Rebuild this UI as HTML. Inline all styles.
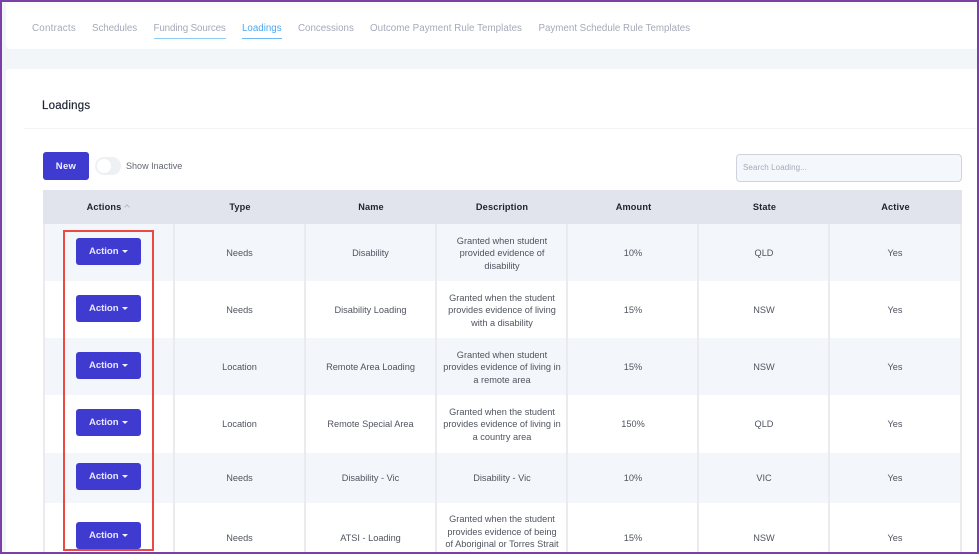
<!DOCTYPE html>
<html><head><meta charset="utf-8">
<style>
html,body{margin:0;padding:0;background:#fff}
#p{position:relative;width:979px;height:554px;overflow:hidden;background:#fff;font-family:"Liberation Sans",sans-serif}
#p div{position:absolute;box-sizing:border-box}
.t{white-space:nowrap;transform:translateX(-50%);text-align:center;font-size:9.2px;line-height:12px;color:#50545f;letter-spacing:0;height:12px;filter:blur(.25px)}
.tab{white-space:nowrap;font-size:9.75px;line-height:12px;color:#a4aab8;letter-spacing:0;top:23px;filter:blur(.25px)}
.h{white-space:nowrap;transform:translateX(-50%);font-size:9.2px;font-weight:bold;line-height:12px;color:#1f2230;letter-spacing:.15px;top:201px;filter:blur(.2px)}
.b{left:76px;width:65px;height:27px;background:#3f3ad0;border-radius:3px}
.bt{left:89px;white-space:nowrap;color:#f1f1ff;font-size:9.6px;line-height:12px;letter-spacing:-.05px;font-weight:bold;opacity:.95;filter:blur(.2px)}
.c{left:122px;width:0;height:0;border-left:3px solid transparent;border-right:3px solid transparent;border-top:3px solid #f1f1ff}
.v{width:2px;background:#ebebef;top:224px;height:330px}
.r{left:44px;width:917px;background:#f3f6fa}
</style></head><body>
<div id="p">
<div style="left:0;top:0;width:979px;height:70px;background:#f3f6f9"></div>
<div style="left:6px;top:0;width:973px;height:49px;background:linear-gradient(#fafafa,#fff 14px);border-radius:0 0 4px 4px"></div>
<div style="left:6px;top:69px;width:973px;height:490px;background:#fff;border-radius:4px 0 0 0"></div>
<div style="left:0;top:70px;width:6px;height:484px;background:#f3f6f9"></div>
<div style="left:24px;top:128px;width:955px;height:1px;background:#f3f4f6"></div>

<div class="tab" style="left:32px;letter-spacing:.25px">Contracts</div>
<div class="tab" style="left:92px;letter-spacing:-.05px">Schedules</div>
<div class="tab" style="left:153.500px;letter-spacing:-.1px">Funding Sources</div>
<div class="tab" style="left:242px;color:#4aa8f5">Loadings</div>
<div class="tab" style="left:298px">Concessions</div>
<div class="tab" style="left:370px;letter-spacing:.05px">Outcome Payment Rule Templates</div>
<div class="tab" style="left:538.500px">Payment Schedule Rule Templates</div>
<div style="left:153.500px;top:38px;width:72.500px;height:1px;background:#8ecbf7"></div>
<div style="left:242px;top:38px;width:40px;height:1px;background:#6cbcf7"></div>

<div style="left:42px;top:100px;font-size:11.5px;line-height:13px;color:#1e2433;letter-spacing:.2px;white-space:nowrap;filter:blur(.15px);-webkit-text-stroke:.2px #1e2433">Loadings</div>

<div style="left:43px;top:152px;width:46px;height:28px;background:#3f3ad0;border-radius:3px"></div>
<div style="left:66px;top:161px;transform:translateX(-50%);color:#f1f1ff;font-size:9.5px;line-height:12px;font-weight:bold;letter-spacing:.3px">New</div>
<div style="left:95px;top:157px;width:26px;height:18px;background:#eef0f3;border-radius:9px"></div>
<div style="left:97px;top:159px;width:14px;height:14px;background:#fff;border-radius:50%"></div>
<div style="left:126px;top:160px;font-size:9px;line-height:12px;color:#62666f;letter-spacing:.02px;white-space:nowrap;filter:blur(.2px)">Show Inactive</div>

<div style="left:736px;top:154px;width:226px;height:28px;background:#f4f7fb;border:1px solid #cfd2dc;border-radius:4px"></div>
<div style="left:743px;top:162px;font-size:8px;line-height:12px;color:#a6aaba;letter-spacing:.08px;white-space:nowrap;filter:blur(.2px)">Search Loading...</div>

<div style="left:43px;top:190px;width:919px;height:34px;background:#e2e4ed"></div>
<div class="h" style="left:104px">Actions</div>
<div style="left:125px;top:205px;width:4px;height:4px;border-left:1px solid #b8bac5;border-top:1px solid #b8bac5;transform:rotate(45deg)"></div>
<div class="h" style="left:240px">Type</div>
<div class="h" style="left:371px">Name</div>
<div class="h" style="left:502px">Description</div>
<div class="h" style="left:633.500px">Amount</div>
<div class="h" style="left:764.500px">State</div>
<div class="h" style="left:895.500px">Active</div>

<div class="r" style="top:224px;height:57px"></div>
<div class="r" style="top:338px;height:57px"></div>
<div class="r" style="top:453px;height:50px"></div>

<div class="v" style="left:43px"></div>
<div class="v" style="left:173px"></div>
<div class="v" style="left:304px"></div>
<div class="v" style="left:435px"></div>
<div class="v" style="left:566px"></div>
<div class="v" style="left:697px"></div>
<div class="v" style="left:828px"></div>
<div class="v" style="left:960px"></div>

<div class="b" style="top:238px"></div><div class="bt" style="top:246px">Action</div><div class="c" style="top:250px"></div>
<div class="b" style="top:295px"></div><div class="bt" style="top:303px">Action</div><div class="c" style="top:307px"></div>
<div class="b" style="top:352px"></div><div class="bt" style="top:360px">Action</div><div class="c" style="top:364px"></div>
<div class="b" style="top:409px"></div><div class="bt" style="top:417px">Action</div><div class="c" style="top:421px"></div>
<div class="b" style="top:463px"></div><div class="bt" style="top:471px">Action</div><div class="c" style="top:475px"></div>
<div class="b" style="top:522px"></div><div class="bt" style="top:530px">Action</div><div class="c" style="top:534px"></div>

<div style="left:63px;top:230px;width:91px;height:321px;border:2px solid #ea4a42"></div>

<div class="t" style="left:239.500px;top:247px">Needs</div>
<div class="t" style="left:370.500px;top:247px">Disability</div>
<div class="t" style="left:502px;top:235px">Granted when student</div>
<div class="t" style="left:502px;top:247px">provided evidence of</div>
<div class="t" style="left:502px;top:260px">disability</div>
<div class="t" style="left:633px;top:247px">10%</div>
<div class="t" style="left:764px;top:247px">QLD</div>
<div class="t" style="left:895px;top:247px">Yes</div>

<div class="t" style="left:239.500px;top:304px">Needs</div>
<div class="t" style="left:370.500px;top:304px">Disability Loading</div>
<div class="t" style="left:502px;top:292px">Granted when the student</div>
<div class="t" style="left:502px;top:304px">provides evidence of living</div>
<div class="t" style="left:502px;top:317px">with a disability</div>
<div class="t" style="left:633px;top:304px">15%</div>
<div class="t" style="left:764px;top:304px">NSW</div>
<div class="t" style="left:895px;top:304px">Yes</div>

<div class="t" style="left:239.500px;top:361px">Location</div>
<div class="t" style="left:370.500px;top:361px">Remote Area Loading</div>
<div class="t" style="left:502px;top:349px">Granted when student</div>
<div class="t" style="left:502px;top:361px">provides evidence of living in</div>
<div class="t" style="left:502px;top:374px">a remote area</div>
<div class="t" style="left:633px;top:361px">15%</div>
<div class="t" style="left:764px;top:361px">NSW</div>
<div class="t" style="left:895px;top:361px">Yes</div>

<div class="t" style="left:239.500px;top:418px">Location</div>
<div class="t" style="left:370.500px;top:418px">Remote Special Area</div>
<div class="t" style="left:502px;top:406px">Granted when the student</div>
<div class="t" style="left:502px;top:418px">provides evidence of living in</div>
<div class="t" style="left:502px;top:431px">a country area</div>
<div class="t" style="left:633px;top:418px">150%</div>
<div class="t" style="left:764px;top:418px">QLD</div>
<div class="t" style="left:895px;top:418px">Yes</div>

<div class="t" style="left:239.500px;top:472px">Needs</div>
<div class="t" style="left:370.500px;top:472px">Disability - Vic</div>
<div class="t" style="left:502px;top:472px">Disability - Vic</div>
<div class="t" style="left:633px;top:472px">10%</div>
<div class="t" style="left:764px;top:472px">VIC</div>
<div class="t" style="left:895px;top:472px">Yes</div>

<div class="t" style="left:239.500px;top:532px">Needs</div>
<div class="t" style="left:370.500px;top:532px">ATSI - Loading</div>
<div class="t" style="left:502px;top:513px">Granted when the student</div>
<div class="t" style="left:502px;top:526px">provides evidence of being</div>
<div class="t" style="left:502px;top:538px">of Aboriginal or Torres Strait</div>
<div class="t" style="left:633px;top:532px">15%</div>
<div class="t" style="left:764px;top:532px">NSW</div>
<div class="t" style="left:895px;top:532px">Yes</div>

<div style="left:0;top:0;width:979px;height:554px;border:2px solid #7b3fa8"></div>
</div>
</body></html>
